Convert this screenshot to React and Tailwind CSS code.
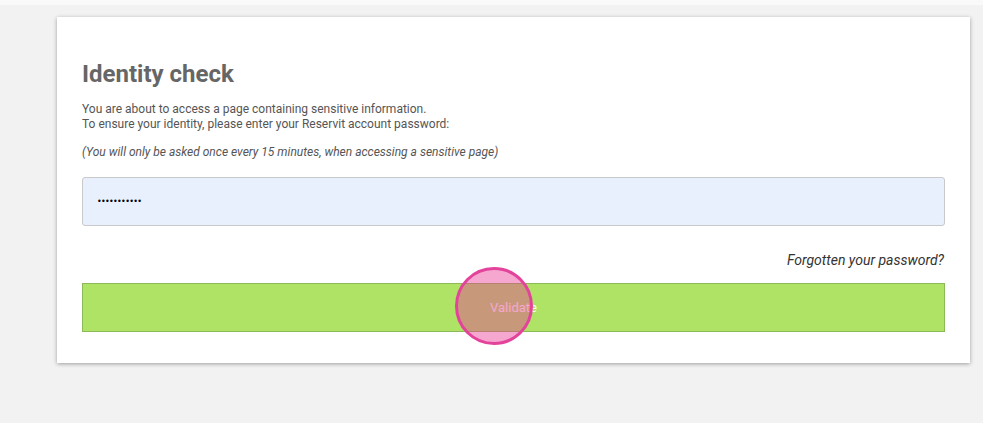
import React from 'react';

const App = () => {
  return (
    <div className="min-h-screen bg-[#f2f2f2] font-['Roboto',sans-serif]">
      {/* bande du haut */}
      <div className="h-[5px] bg-[#f9f9f9]"></div>

      <div className="pt-[12px] pl-[57px] pr-[13px]">
        <div className="bg-white shadow-[0_1px_4px_rgba(0,0,0,0.35)] px-[25px] pt-[43px] pb-[31px]">
          <h2 className="text-[24px] leading-[29px] font-bold text-[#666]">Identity check</h2>

          <p className="mt-[13px] text-[12px] leading-[15px] text-[#555]">
            You are about to access a page containing sensitive information.
            <br />
            To ensure your identity, please enter your Reservit account password:
          </p>

          <p className="mt-[13px] text-[12px] leading-[15px] italic text-[#555]">
            (You will only be asked once every 15 minutes, when accessing a sensitive page)
          </p>

          <div className="mt-[17px] h-[49px] flex items-center bg-[#e8f0fe] border border-[#c9c9c9] rounded-[3px] px-[14px]">
            <span className="text-[8px] tracking-[-0.7px] text-black font-['DejaVu_Sans',sans-serif] leading-none">
              •••••••••••
            </span>
          </div>

          <div className="mt-[26px] flex justify-end">
            <span className="text-[14px] leading-[17px] italic text-[#333] mr-[1px]">Forgotten your password?</span>
          </div>

          <div className="relative mt-[14px]">
            <button className="w-full h-[49px] bg-[#aee366] border border-[#8dba58] text-white text-[13px]">
              Validate
            </button>
            {/* indicateur de clic */}
            <div className="absolute left-[373px] top-[-16px] w-[78px] h-[78px] rounded-full border-[3px] border-[#e3439b] bg-[rgba(232,59,149,0.45)]"></div>
          </div>
        </div>
      </div>
    </div>
  );
};

export default App;
